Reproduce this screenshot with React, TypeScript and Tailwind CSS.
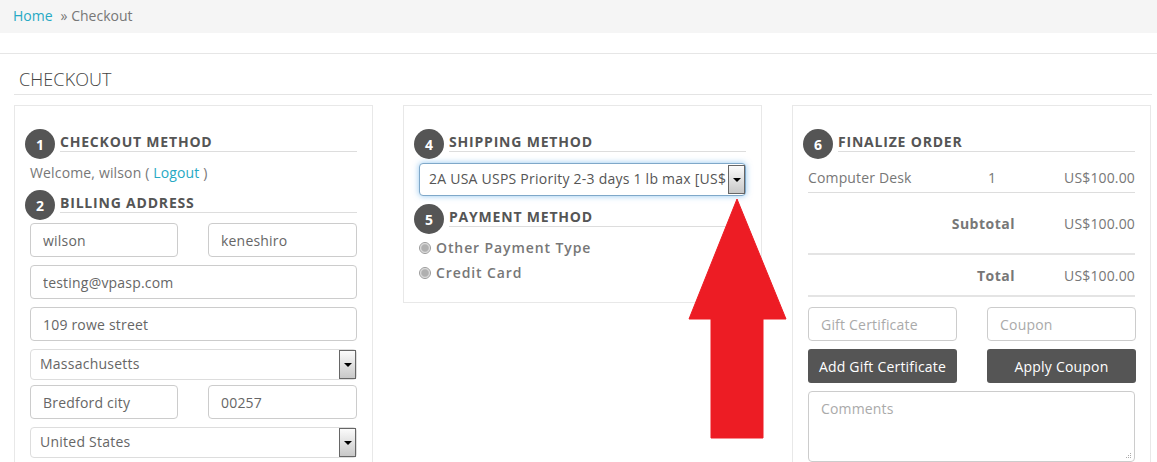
import React from 'react';

const Step = ({ num, title }: { num: number; title: string }) => (
  <div className="flex h-[30px] items-start">
    <div className="flex h-[30px] w-[30px] shrink-0 items-center justify-center rounded-full bg-[#555] text-[14px] font-bold text-white">
      {num}
    </div>
    <h3 className="ml-[5px] h-[23px] flex-1 border-b border-[#ddd] text-[14px] leading-[25px] font-bold tracking-[0.8px] text-[#555]">
      {title}
    </h3>
  </div>
);

const Field = ({ value, placeholder, className = '' }: { value?: string; placeholder?: string; className?: string }) => (
  <input
    readOnly
    defaultValue={value}
    placeholder={placeholder}
    className={`h-[34px] w-full min-w-0 rounded-[4px] border border-[#ccc] bg-white px-[12px] text-[14px] font-normal tracking-[0.2px] text-[#666] placeholder:text-[#aaa] ${className}`}
  />
);

const Dropdown = ({ value, focused = false }: { value: string; focused?: boolean }) => (
  <div
    className={`flex items-center rounded-[4px] border bg-white ${
      focused
        ? 'h-[33px] border-[#7fa8c9] pl-[9px] shadow-[0_0_6px_rgba(102,175,233,0.7)]'
        : 'h-[31px] border-[#ddd] pl-[9px]'
    }`}
  >
    <span className={`flex-1 pb-[2px] text-[14px] font-normal tracking-[0.24px] whitespace-nowrap ${focused ? 'text-[#555]' : 'text-[#666]'}`}>
      {value}
    </span>
    <div className="flex h-[29px] w-[17px] shrink-0 items-center justify-center border border-[#666] bg-gradient-to-b from-[#fbfbfb] to-[#c8c8c8]">
      <div className="h-0 w-0 border-x-[4px] border-t-[4px] border-x-transparent border-t-black" />
    </div>
  </div>
);

const Radio = ({ label }: { label: string }) => (
  <div className="flex h-[25px] items-center">
    <div className="h-[12px] w-[12px] rounded-full border border-[#999] bg-[radial-gradient(circle,#b0b0b0_45%,#eee_70%)]" />
    <span className="ml-[5px] text-[14px] font-semibold tracking-[0.9px] text-[#777]">{label}</span>
  </div>
);

export default function App() {
  return (
    <div className="relative h-[462px] overflow-hidden bg-white font-['Open_Sans',sans-serif] font-light text-[#555]">
      {/* Breadcrumb */}
      <div className="flex h-[33px] items-center bg-[#f5f5f5] pb-[2px] pl-[13px] text-[14px] font-normal text-[#777]">
        <a className="text-[#27a9c4]">Home</a>
        <span className="ml-[8px]">» Checkout</span>
      </div>
      <div className="mt-[20px] border-t border-[#e6e6e6]" />

      <div className="pr-[5px] pl-[14px]">
        <h1 className="h-[41px] border-b border-[#e4e4e4] pt-[12px] pl-[5px] text-[18px] leading-[26px] tracking-[0.1px] text-[#444]">CHECKOUT</h1>

        <div className="mt-[10px] grid grid-cols-[359px_359px_359px] gap-[30px]">
          {/* Column 1 */}
          <div className="h-[400px] border border-[#e8e8e8] pt-[23px] pr-[15px] pl-[10px]">
            <Step num={1} title="CHECKOUT METHOD" />
            <div className="h-[31px] pl-[5px] text-[14px] leading-[28px] font-normal tracking-[0.15px] text-[#777]">
              Welcome, wilson ( <a className="text-[#27a9c4]">Logout</a> )
            </div>
            <Step num={2} title="BILLING ADDRESS" />
            <div className="mt-[3px] flex flex-col gap-[8px] pl-[5px]">
              <div className="grid grid-cols-[148px_149px] gap-[30px]">
                <Field value="wilson" />
                <Field value="keneshiro" />
              </div>
              <Field value="testing@vpasp.com" />
              <Field value="109 rowe street" />
              <Dropdown value="Massachusetts" />
              <div className="-mt-[3px] grid grid-cols-[148px_149px] gap-[30px]">
                <Field value="Bredford city" />
                <Field value="00257" />
              </div>
              <Dropdown value="United States" />
            </div>
          </div>

          {/* Column 2 */}
          <div className="h-[198px] border border-[#e8e8e8] pt-[23px] pr-[15px] pl-[10px]">
            <Step num={4} title="SHIPPING METHOD" />
            <div className="mt-[4px] pl-[5px]">
              <Dropdown value="2A USA USPS Priority 2-3 days 1 lb max [US$" focused />
            </div>
            <div className="mt-[8px]">
              <Step num={5} title="PAYMENT METHOD" />
            </div>
            <div className="mt-[1px] pl-[5px]">
              <Radio label="Other Payment Type" />
              <Radio label="Credit Card" />
            </div>
          </div>

          {/* Column 3 */}
          <div className="h-[400px] border border-[#e8e8e8] pt-[23px] pr-[15px] pl-[10px]">
            <Step num={6} title="FINALIZE ORDER" />
            <div className="pl-[5px] text-[14px] font-normal tracking-[0.15px] text-[#777]">
              <div className="-mt-[3px] grid h-[37px] grid-cols-[180px_1fr_120px] items-center border-b border-[#ddd] pt-[6px]">
                <span>Computer Desk</span>
                <span>1</span>
                <span className="text-right">US$100.00</span>
              </div>
              <div className="grid h-[62px] grid-cols-[1fr_120px] items-center border-b-2 border-[#e4e4e4]">
                <span className="text-right font-bold tracking-[0.5px]">Subtotal</span>
                <span className="text-right">US$100.00</span>
              </div>
              <div className="grid h-[42px] grid-cols-[1fr_120px] items-center border-b-2 border-[#e4e4e4]">
                <span className="text-right font-bold tracking-[0.5px]">Total</span>
                <span className="text-right">US$100.00</span>
              </div>
              <div className="mt-[10px] grid grid-cols-[149px_149px] gap-x-[30px] gap-y-[8px]">
                <Field placeholder="Gift Certificate" />
                <Field placeholder="Coupon" />
                <button className="h-[34px] rounded-[3px] bg-[#555] text-[14px] font-normal tracking-[0.2px] text-white">Add Gift Certificate</button>
                <button className="h-[34px] rounded-[3px] bg-[#555] text-[14px] font-normal tracking-[0.2px] text-white">Apply Coupon</button>
              </div>
              <div className="relative mt-[8px]">
                <textarea
                  readOnly
                  placeholder="Comments"
                  className="block h-[71px] w-full resize-none rounded-[4px] border border-[#ccc] bg-white px-[12px] py-[6px] text-[14px] placeholder:text-[#aaa]"
                />
                <svg className="absolute right-[3px] bottom-[3px]" width="7" height="7" viewBox="0 0 7 7" fill="#aaa">
                  <rect x="5" y="1" width="1" height="1" />
                  <rect x="3" y="3" width="1" height="1" />
                  <rect x="5" y="3" width="1" height="1" />
                  <rect x="1" y="5" width="1" height="1" />
                  <rect x="3" y="5" width="1" height="1" />
                  <rect x="5" y="5" width="1" height="1" />
                </svg>
              </div>
            </div>
          </div>
        </div>
      </div>

      {/* Red annotation arrow */}
      <svg className="absolute top-[198px] left-[688px]" width="99" height="241" viewBox="0 0 99 241">
        <path d="M49 1 L98 121 H75 V240 H23 V121 H1 Z" fill="#ed1c24" stroke="#ed1c24" strokeWidth="1" strokeLinejoin="round" />
      </svg>
    </div>
  );
}
